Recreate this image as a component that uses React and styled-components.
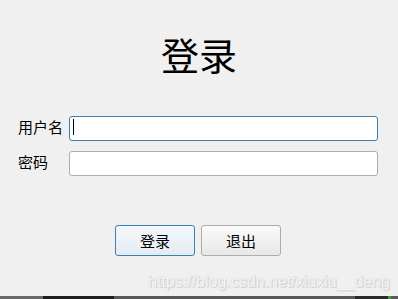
import React from 'react';
import styled, { createGlobalStyle } from 'styled-components';

const GlobalStyle = createGlobalStyle`
  html, body {
    margin: 0;
    padding: 0;
    background: #f0f0f0;
  }
  body {
    font-family: "Noto Sans CJK SC", "Liberation Sans", sans-serif;
  }
`;

const Window = styled.div`
  width: 398px;
  height: 299px;
  display: flex;
  flex-direction: column;
  background: #f0f0f0;
  overflow: hidden;
`;

const Title = styled.h1`
  margin: 32px 0 0;
  height: 44px;
  font-size: 38px;
  line-height: 44px;
  font-weight: 400;
  text-align: center;
  color: #000;
`;

const Form = styled.div`
  display: flex;
  flex-direction: column;
  gap: 10px;
  margin-top: 38px;
  padding-left: 18px;
`;

const Row = styled.div`
  display: flex;
  align-items: center;
`;

const Label = styled.label`
  width: 51px;
  font-size: 15px;
  color: #000;
`;

const Field = styled.div`
  position: relative;
  width: 309px;
  height: 25px;
`;

const Input = styled.input`
  box-sizing: border-box;
  width: 100%;
  height: 100%;
  border: 1px solid ${p => (p.$focused ? '#3c7fb1' : '#abadb3')};
  border-radius: 3px;
  background: #fff;
  outline: none;
  caret-color: transparent;
  padding: 0 4px;
`;

const Caret = styled.span`
  position: absolute;
  left: 4px;
  top: 5px;
  width: 1px;
  height: 16px;
  background: #000;
`;

const Buttons = styled.div`
  display: flex;
  justify-content: center;
  gap: 6px;
  margin-top: 51px;
  padding-right: 2px;
`;

const Button = styled.button`
  box-sizing: border-box;
  width: 80px;
  height: 31px;
  border: 1px solid ${p => (p.$primary ? '#3c7fb1' : '#acacac')};
  border-radius: 3px;
  background: ${p =>
    p.$primary
      ? 'linear-gradient(#f4f8fb, #e3ebf2)'
      : 'linear-gradient(#fafafa, #e8e8e8)'};
  font-family: "Noto Sans CJK SC", sans-serif;
  font-size: 15px;
  color: #000;
  padding: 0;
`;

const Watermark = styled.div`
  margin-top: 18px;
  padding-right: 8px;
  text-align: right;
  font-family: "Liberation Sans", sans-serif;
  font-size: 16px;
  line-height: 15px;
  white-space: nowrap;
  color: #f6f6f6;
  text-shadow: 0 0 1px #c4c4c4, 1px 1px 1px #cccccc;
`;

const Taskbar = styled.div`
  margin-top: auto;
  height: 3px;
  display: flex;
`;

const Segment = styled.div`
  width: ${p => p.$w}px;
  background: ${p => p.$c};
`;

const App = () => {
  return (
    <Window>
      <GlobalStyle />
      <Title>登录</Title>
      <Form>
        <Row>
          <Label>用户名</Label>
          <Field>
            <Input $focused type="text" />
            <Caret />
          </Field>
        </Row>
        <Row>
          <Label>密码</Label>
          <Field>
            <Input type="password" />
          </Field>
        </Row>
      </Form>
      <Buttons>
        <Button $primary>登录</Button>
        <Button>退出</Button>
      </Buttons>
      <Watermark>https://blog.csdn.net/xiuxiu__deng</Watermark>
      <Taskbar>
        <Segment $w={43} $c="#6a6a6a" />
        <Segment $w={71} $c="#1e1e1e" />
        <Segment $w={241} $c="#585858" />
        <Segment $w={33} $c="#2a2a2a" />
        <Segment $w={3} $c="#3aa03a" />
        <Segment $w={7} $c="#5a5a5a" />
      </Taskbar>
    </Window>
  );
};

export default App;
